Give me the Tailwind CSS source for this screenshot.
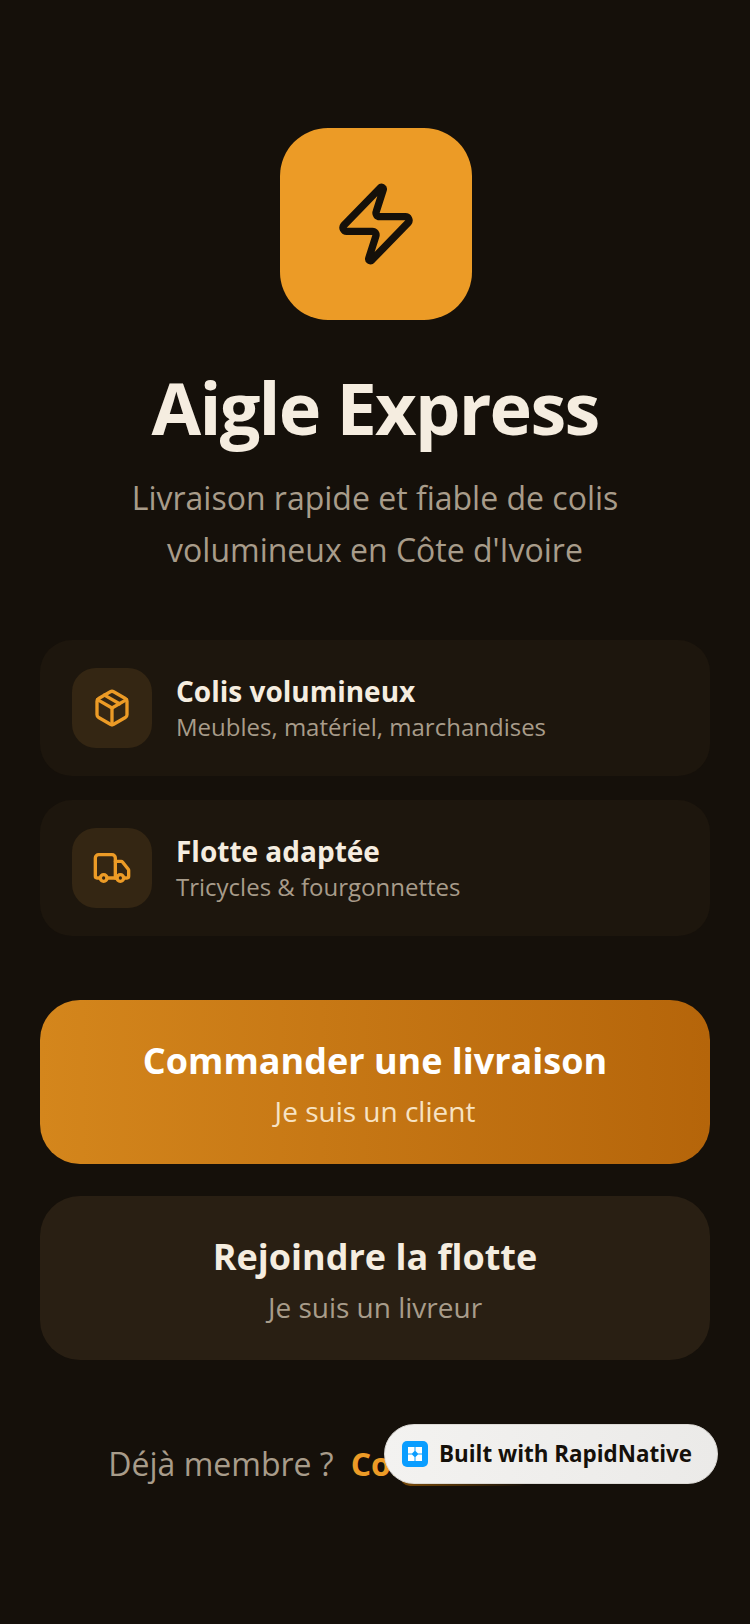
<!DOCTYPE html>
<html lang="fr">
<head>
  <meta charset="UTF-8">
  <title>Aigle Express</title>
  <script src="https://cdn.jsdelivr.net/npm/@tailwindcss/browser@4"></script>
</head>
<body class="bg-[#15100a] font-['Open_Sans',sans-serif]">
  <div class="relative w-[750px] h-[1624px] overflow-hidden px-10 pt-[128px] flex flex-col items-center">
    <!-- logo -->
    <div class="ml-[2px] w-[192px] h-[192px] rounded-[48px] bg-[#ec9b26] flex items-center justify-center">
      <svg class="w-[88px] h-[88px]" viewBox="0 0 24 24" fill="none" stroke="#15100a" stroke-width="2" stroke-linecap="round" stroke-linejoin="round">
        <path d="M4 14a1 1 0 0 1-.78-1.63l9.9-10.2a.5.5 0 0 1 .86.46l-1.92 6.02A1 1 0 0 0 13 10h7a1 1 0 0 1 .78 1.63l-9.9 10.2a.5.5 0 0 1-.86-.46l1.92-6.02A1 1 0 0 0 11 14z"/>
      </svg>
    </div>
    <h1 class="mt-[43px] text-[72px] leading-[88px] font-bold tracking-[-1.77px] text-[#f5ede0]">Aigle Express</h1>
    <p class="mt-[21px] text-[32px] leading-[52px] text-[#a89c8a] text-center">Livraison rapide et fiable de colis<br>volumineux en Côte d'Ivoire</p>

    <!-- features -->
    <div class="mt-[64px] w-full flex flex-col gap-[24px]">
      <div class="h-[136px] rounded-[32px] bg-[#1d160d] px-8 flex items-center gap-6">
        <div class="w-[80px] h-[80px] rounded-[24px] bg-[#342613] flex items-center justify-center">
          <svg class="w-[40px] h-[40px]" viewBox="0 0 24 24" fill="none" stroke="#ec9b26" stroke-width="2" stroke-linecap="round" stroke-linejoin="round">
            <path d="M11 21.73a2 2 0 0 0 2 0l7-4A2 2 0 0 0 21 16V8a2 2 0 0 0-1-1.73l-7-4a2 2 0 0 0-2 0l-7 4A2 2 0 0 0 3 8v8a2 2 0 0 0 1 1.73z"/>
            <path d="M12 22V12"/>
            <path d="m3.3 7 8.7 5 8.7-5"/>
            <path d="m7.5 4.27 9 5.15"/>
          </svg>
        </div>
        <div>
          <div class="text-[28px] leading-[36px] font-bold text-[#f5ede0]">Colis volumineux</div>
          <div class="mt-[2px] text-[24px] leading-[32px] text-[#a89c8a]">Meubles, matériel, marchandises</div>
        </div>
      </div>
      <div class="h-[136px] rounded-[32px] bg-[#1d160d] px-8 flex items-center gap-6">
        <div class="w-[80px] h-[80px] rounded-[24px] bg-[#342613] flex items-center justify-center">
          <svg class="w-[40px] h-[40px]" viewBox="0 0 24 24" fill="none" stroke="#ec9b26" stroke-width="2" stroke-linecap="round" stroke-linejoin="round">
            <path d="M14 18V6a2 2 0 0 0-2-2H4a2 2 0 0 0-2 2v11a1 1 0 0 0 1 1h2"/>
            <path d="M15 18H9"/>
            <path d="M19 18h2a1 1 0 0 0 1-1v-3.65a1 1 0 0 0-.22-.624l-3.48-4.35A1 1 0 0 0 17.52 8H14"/>
            <circle cx="17" cy="18" r="2"/>
            <circle cx="7" cy="18" r="2"/>
          </svg>
        </div>
        <div>
          <div class="text-[28px] leading-[36px] font-bold text-[#f5ede0]">Flotte adaptée</div>
          <div class="mt-[2px] text-[24px] leading-[32px] text-[#a89c8a]">Tricycles &amp; fourgonnettes</div>
        </div>
      </div>
    </div>

    <!-- actions -->
    <div class="mt-[64px] w-full flex flex-col gap-[32px]">
      <div class="h-[164px] pt-[4px] rounded-[40px] bg-gradient-to-r from-[#d4861c] to-[#b5650a] flex flex-col items-center justify-center">
        <div class="text-[36px] leading-[48px] font-bold text-white">Commander une livraison</div>
        <div class="mt-[6px] text-[28px] leading-[40px] text-[#f7e3c4]">Je suis un client</div>
      </div>
      <div class="h-[164px] pt-[4px] rounded-[40px] bg-[#291f13] flex flex-col items-center justify-center">
        <div class="text-[36px] leading-[48px] font-bold text-[#f5ede0]">Rejoindre la flotte</div>
        <div class="mt-[6px] text-[28px] leading-[40px] text-[#a89c8a]">Je suis un livreur</div>
      </div>
    </div>

    <!-- footer -->
    <div class="mt-[80px] flex items-center gap-[17px] text-[32px] leading-[48px]">
      <span class="text-[#a89c8a]">Déjà membre ?</span>
      <span class="w-[291px] font-bold text-[#ec9b26]">Connectez-vous</span>
    </div>

    <!-- badge -->
    <div class="absolute left-[400px] top-[1474px] w-[130px] h-[12px] rounded-b-[10px] bg-gradient-to-r from-[#7a4a08] to-transparent"></div>
    <div class="absolute left-[384px] top-[1424px] w-[334px] h-[60px] rounded-full border border-[#dcdad6] bg-gradient-to-r from-[#f3f2f0] to-[#ebeae8] flex items-center pl-[17px] gap-[11px]">
      <div class="w-[26px] h-[26px] rounded-[5px] bg-[#0a9dff] flex items-center justify-center">
        <svg class="w-[16px] h-[16px]" viewBox="0 0 16 16" fill="#fff">
          <path d="M1 1h6.500v4L5 7.500H1z"/>
          <path d="M8.500 1H15v6.500h-4L8.500 5z"/>
          <path d="M1 8.500h4L7.500 11v4H1z"/>
          <path d="M11 8.500h4V15H8.500v-4z"/>
        </svg>
      </div>
      <span class="text-[22.4px] leading-[30px] font-bold text-[#15100a]">Built with RapidNative</span>
    </div>
  </div>
</body>
</html>
